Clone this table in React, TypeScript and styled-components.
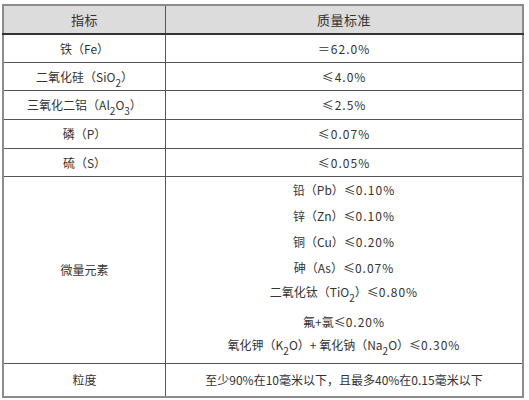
import React from 'react';
import styled, { createGlobalStyle } from 'styled-components';

const GlobalStyle = createGlobalStyle`
  html, body {
    margin: 0;
    padding: 0;
    background: #ffffff;
  }
  body {
    font-family: "Noto Sans CJK SC", "Noto Sans", sans-serif;
    color: #333333;
  }
`;

const Page = styled.div`
  padding: 4px 0 0 2px;
`;

const Table = styled.table`
  width: 522px;
  border-collapse: collapse;
  border: 2px solid #8c8c8c;
  table-layout: fixed;
  font-size: 12px;
`;

const HeadCell = styled.th<{ $w?: number }>`
  width: ${(p) => (p.$w ? `${p.$w}px` : 'auto')};
  height: 27px;
  padding: 0;
  background: #dcdcdc;
  border-bottom: 2px solid #333333;
  border-left: 1px solid #555555;
  font-size: 13px;
  font-weight: normal;
  letter-spacing: 0.5px;
  text-align: center;
  vertical-align: middle;
  &:first-child {
    border-left: none;
  }
`;

const Cell = styled.td<{ $h: number }>`
  height: ${(p) => p.$h - 1}px;
  padding: 0;
  border-top: 1px solid #555555;
  border-left: 1px solid #555555;
  text-align: center;
  vertical-align: middle;
  line-height: 14px;
  white-space: nowrap;
  &:first-child {
    border-left: none;
  }
`;

const Sub = styled.sub`
  font-size: 10px;
  line-height: 0;
  vertical-align: -5px;
`;

const Value = styled.span`
  letter-spacing: 1px;
`;

const TraceList = styled.div`
  display: flex;
  flex-direction: column;
  align-items: center;
  padding-top: 5px;
  height: 185px;
  box-sizing: border-box;
`;

const TraceLine = styled.div<{ $gap: number }>`
  margin-top: ${(p) => p.$gap}px;
  line-height: 14px;
`;

const rows: { name: React.ReactNode; value: string; h: number }[] = [
  { name: '铁（Fe）', value: '＝62.0%', h: 28 },
  {
    name: (
      <>
        二氧化硅（SiO<Sub>2</Sub>）
      </>
    ),
    value: '≤4.0%',
    h: 28,
  },
  {
    name: (
      <>
        三氧化二铝（Al<Sub>2</Sub>O<Sub>3</Sub>）
      </>
    ),
    value: '≤2.5%',
    h: 29,
  },
  { name: '磷（P）', value: '≤0.07%', h: 29 },
  { name: '硫（S）', value: '≤0.05%', h: 28 },
];

const traces: { text: React.ReactNode; gap: number }[] = [
  { text: <>铅（Pb）≤<Value>0.10%</Value></>, gap: 0 },
  { text: <>锌（Zn）≤<Value>0.10%</Value></>, gap: 12 },
  { text: <>铜（Cu）≤<Value>0.20%</Value></>, gap: 12 },
  { text: <>砷（As）≤<Value>0.07%</Value></>, gap: 12 },
  {
    text: (
      <>
        二氧化钛（TiO<Sub>2</Sub>）≤<Value>0.80%</Value>
      </>
    ),
    gap: 10,
  },
  { text: <>氟+氯≤<Value>0.20%</Value></>, gap: 16 },
  {
    text: (
      <>
        氧化钾（K<Sub>2</Sub>O）+ 氧化钠（Na<Sub>2</Sub>O）≤<Value>0.30%</Value>
      </>
    ),
    gap: 9,
  },
];

const App = () => (
  <Page>
    <GlobalStyle />
    <Table>
      <thead>
        <tr>
          <HeadCell $w={161}>指标</HeadCell>
          <HeadCell>质量标准</HeadCell>
        </tr>
      </thead>
      <tbody>
        {rows.map((r, i) => (
          <tr key={i}>
            <Cell $h={r.h}>{r.name}</Cell>
            <Cell $h={r.h}>
              <Value>{r.value}</Value>
            </Cell>
          </tr>
        ))}
        <tr>
          <Cell $h={187}>微量元素</Cell>
          <Cell $h={187}>
            <TraceList>
              {traces.map((t, i) => (
                <TraceLine key={i} $gap={t.gap}>
                  {t.text}
                </TraceLine>
              ))}
            </TraceList>
          </Cell>
        </tr>
        <tr>
          <Cell $h={33}>粒度</Cell>
          <Cell $h={33}>至少90%在10毫米以下，且最多40%在0.15毫米以下</Cell>
        </tr>
      </tbody>
    </Table>
  </Page>
);

export default App;
